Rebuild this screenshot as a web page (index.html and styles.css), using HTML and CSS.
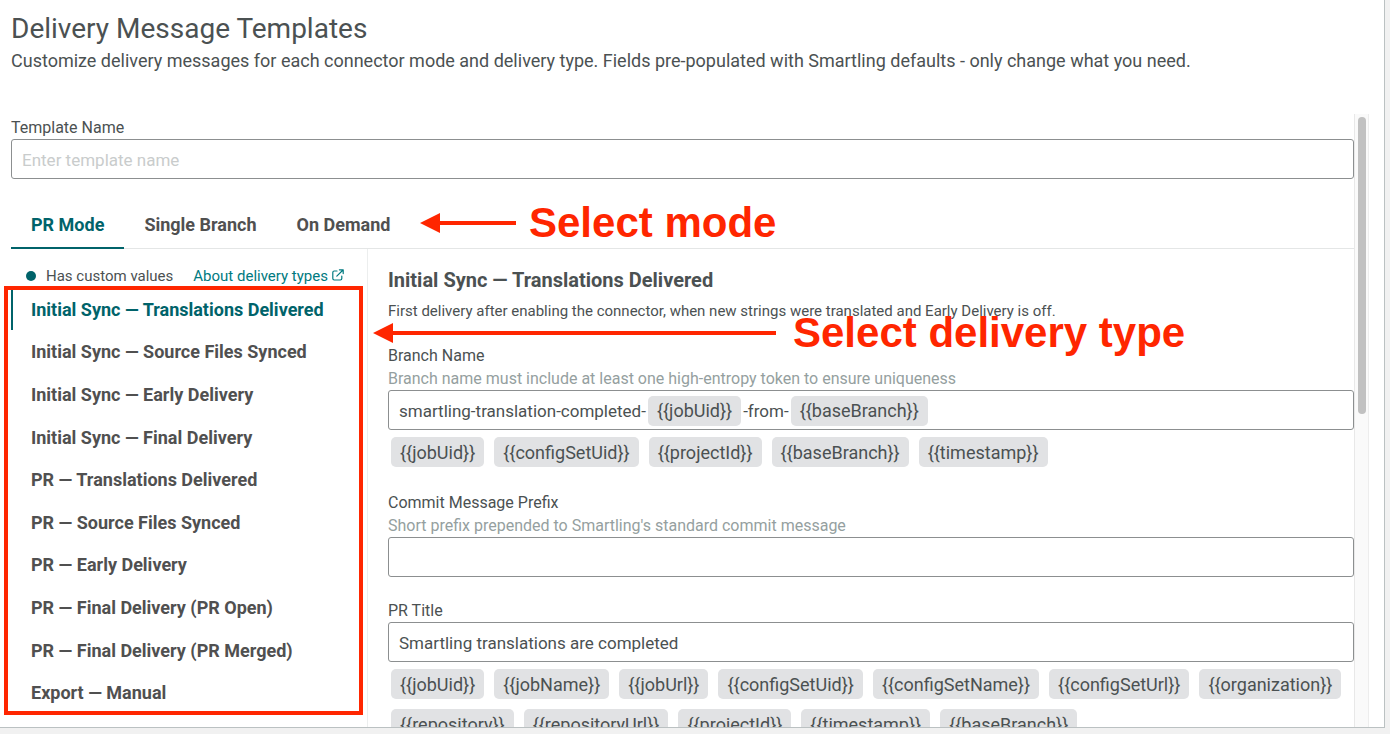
FILE: index.html
```html
<!DOCTYPE html>
<html lang="en">
<head>
<meta charset="utf-8">
<title>Delivery Message Templates</title>
<link rel="stylesheet" href="styles.css">
</head>
<body>
<div class="panel">
  <header class="page-header">
    <h1 class="page-title">Delivery Message Templates</h1>
    <p class="page-subtitle">Customize delivery messages for each connector mode and delivery type. Fields pre-populated with Smartling defaults - only change what you need.</p>
  </header>
  <div class="scroll-area">
    <form class="form">
      <label class="label" for="template-name">Template Name</label>
      <input class="input" id="template-name" type="text" placeholder="Enter template name">
      <div class="tabs" role="tablist">
        <button class="tab tab-active" type="button" role="tab" aria-selected="true">PR Mode</button>
        <button class="tab" type="button" role="tab" aria-selected="false">Single Branch</button>
        <button class="tab" type="button" role="tab" aria-selected="false">On Demand</button>
      </div>
      <div class="columns">
        <nav class="sidebar">
          <div class="legend">
            <span class="dot"></span>
            <span class="legend-text">Has custom values</span>
            <a class="link" href="#">About delivery types
              <svg class="link-icon" viewBox="0 0 12 12" fill="none" stroke="currentColor" stroke-width="1.2" stroke-linecap="round" stroke-linejoin="round"><path d="M5 2H2.2Q.8 2 .8 3.4v6.2Q.8 11 2.2 11h6.2q1.4 0 1.4-1.4V7M7.4.8h3.8v3.8M11 1 4.8 7.2"/></svg>
            </a>
          </div>
          <div class="types">
            <button class="type type-active" type="button">Initial Sync — Translations Delivered</button>
            <button class="type" type="button">Initial Sync — Source Files Synced</button>
            <button class="type" type="button">Initial Sync — Early Delivery</button>
            <button class="type" type="button">Initial Sync — Final Delivery</button>
            <button class="type" type="button">PR — Translations Delivered</button>
            <button class="type" type="button">PR — Source Files Synced</button>
            <button class="type" type="button">PR — Early Delivery</button>
            <button class="type" type="button">PR — Final Delivery (PR Open)</button>
            <button class="type" type="button">PR — Final Delivery (PR Merged)</button>
            <button class="type" type="button">Export — Manual</button>
          </div>
        </nav>
        <section class="details">
          <h2 class="details-title">Initial Sync — Translations Delivered</h2>
          <p class="details-text">First delivery after enabling the connector, when new strings were translated and Early Delivery is off.</p>
          <div class="field">
            <span class="label" id="branch-label">Branch Name</span>
            <span class="help">Branch name must include at least one high-entropy token to ensure uniqueness</span>
            <div class="input token-input" role="textbox" contenteditable="true" spellcheck="false" aria-labelledby="branch-label"><span>smartling-translation-completed-</span><span class="chip">{{jobUid}}</span><span>-from-</span><span class="chip">{{baseBranch}}</span></div>
            <div class="chips">
              <button class="chip" type="button">{{jobUid}}</button>
              <button class="chip" type="button">{{configSetUid}}</button>
              <button class="chip" type="button">{{projectId}}</button>
              <button class="chip" type="button">{{baseBranch}}</button>
              <button class="chip" type="button">{{timestamp}}</button>
            </div>
          </div>
          <div class="field">
            <label class="label" for="commit-prefix">Commit Message Prefix</label>
            <span class="help">Short prefix prepended to Smartling's standard commit message</span>
            <input class="input" id="commit-prefix" type="text">
          </div>
          <div class="field">
            <label class="label" for="pr-title">PR Title</label>
            <input class="input" id="pr-title" type="text" value="Smartling translations are completed">
            <div class="chips">
              <button class="chip" type="button">{{jobUid}}</button>
              <button class="chip" type="button">{{jobName}}</button>
              <button class="chip" type="button">{{jobUrl}}</button>
              <button class="chip" type="button">{{configSetUid}}</button>
              <button class="chip" type="button">{{configSetName}}</button>
              <button class="chip" type="button">{{configSetUrl}}</button>
              <button class="chip" type="button">{{organization}}</button>
              <button class="chip" type="button">{{repository}}</button>
              <button class="chip" type="button">{{repositoryUrl}}</button>
              <button class="chip" type="button">{{projectId}}</button>
              <button class="chip" type="button">{{timestamp}}</button>
              <button class="chip" type="button">{{baseBranch}}</button>
            </div>
          </div>
        </section>
      </div>
    </form>
    <div class="track"><div class="thumb"></div></div>
  </div>
</div>
<div class="note note-mode">
  <svg class="arrow" width="96" height="20" viewBox="0 0 96 20"><path d="M0 10 20 0v8h76v4H20v8z"/></svg>
  <span>Select mode</span>
</div>
<div class="note note-type">
  <svg class="arrow" width="403" height="20" viewBox="0 0 403 20"><path d="M0 10 20 0v8h383v4H20v8z"/></svg>
  <span>Select delivery type</span>
</div>
<div class="note-frame"></div>
</body>
</html>
```
FILE: styles.css
```css
* {
  box-sizing: border-box;
}

body {
  margin: 0;
  height: 100vh;
  padding: 0 5px 6px 0;
  overflow: hidden;
  background: #f1f1f1;
  color: #4b5152;
  font-family: Roboto, "Liberation Sans", sans-serif;
  font-size: 16px;
}

button,
input {
  font: inherit;
  color: inherit;
}

.panel {
  display: flex;
  flex-direction: column;
  height: 100%;
  padding: 0 15px 0 11px;
  overflow: hidden;
  background: #fff;
  border-right: 1px solid #bbc1c2;
  border-bottom: 1px solid #bbc1c2;
}

.page-header {
  padding: 12px 0 41px;
}

.page-title {
  margin: 0;
  font-size: 28px;
  line-height: 34px;
  font-weight: 400;
}

.page-subtitle {
  margin: 3px 0 0;
  font-size: 18px;
  line-height: 24px;
  white-space: nowrap;
}

.scroll-area {
  display: flex;
  flex: 1;
  min-height: 0;
}

.form {
  flex: 1;
  min-width: 0;
  padding-top: 2px;
  overflow: hidden;
}

.track {
  width: 15px;
  padding: 3px;
  background: #fafafa;
  border-left: 1px solid #e8e8e8;
  border-right: 1px solid #ededed;
}

.thumb {
  width: 8px;
  height: 49%;
  border-radius: 4px;
  background: #c1c1c1;
}

.label,
.help {
  display: block;
  font-size: 16px;
  line-height: 23px;
}

.help {
  color: #959fa0;
}

.input {
  display: block;
  width: 100%;
  height: 40px;
  padding: 1px 10px 0;
  border: 1px solid #8c8f90;
  border-radius: 3px;
  background: #fff;
  font-size: 17px;
}

.input::placeholder {
  color: #c9cccc;
}

.tabs {
  display: flex;
  margin-top: 20px;
  border-bottom: 1px solid #e4e6e6;
}

.tab {
  height: 50px;
  margin-bottom: -1px;
  padding: 2px 20px 0;
  border: 0;
  border-bottom: 2px solid transparent;
  background: none;
  color: #505050;
  font-size: 18px;
  font-weight: 700;
}

.tab-active {
  color: #00636a;
  border-bottom-color: #00636a;
}

.columns {
  display: flex;
}

.sidebar {
  flex: 0 0 357px;
  border-right: 1px solid #eceeee;
}

.legend {
  display: flex;
  align-items: center;
  height: 40px;
  padding: 13px 0 0 15px;
  font-size: 15px;
}

.dot {
  width: 10px;
  height: 10px;
  border-radius: 50%;
  background: #00636a;
}

.legend-text {
  margin: 0 20px 0 10px;
}

.link {
  color: #007a80;
  text-decoration: none;
}

.link-icon {
  width: 12px;
  height: 12px;
}

.types {
  display: grid;
  grid-auto-rows: 1fr;
  gap: 2px;
  height: 424px;
  margin-bottom: 20px;
}

.type {
  padding: 0 18px;
  border: 0;
  border-left: 2px solid transparent;
  background: none;
  color: #505050;
  font-size: 18px;
  font-weight: 700;
  text-align: left;
}

.type-active {
  color: #00636a;
  border-left-color: #00636a;
}

.details {
  flex: 1;
  min-width: 0;
  padding: 18px 0 0 20px;
}

.details-title {
  margin: 0;
  font-size: 20px;
  line-height: 26px;
  font-weight: 700;
}

.details-text {
  margin: 8px 0 23px;
  font-size: 15px;
  line-height: 20px;
}

.field {
  margin-bottom: 22px;
}

.token-input {
  display: flex;
  align-items: center;
  gap: 2px;
}

.chips {
  display: flex;
  flex-wrap: wrap;
  gap: 10px;
  padding: 7px 3px 2px;
}

.chip {
  display: inline-flex;
  align-items: center;
  height: 30px;
  padding: 0 9px;
  border: 0;
  border-radius: 5px;
  background: #e1e2e4;
  font-size: 18px;
}

.note {
  position: absolute;
  display: flex;
  align-items: center;
  color: #ff2600;
  font: 700 42px/48px "Liberation Sans", Arial, sans-serif;
  white-space: nowrap;
}

.note-mode {
  top: 199px;
  left: 420px;
  gap: 13px;
}

.note-type {
  top: 309px;
  left: 373px;
  gap: 17px;
}

.arrow {
  fill: #ff2600;
}

.note-frame {
  position: absolute;
  top: 286px;
  left: 4px;
  width: 359px;
  height: 429px;
  border: 4px solid #ff2600;
}
```
